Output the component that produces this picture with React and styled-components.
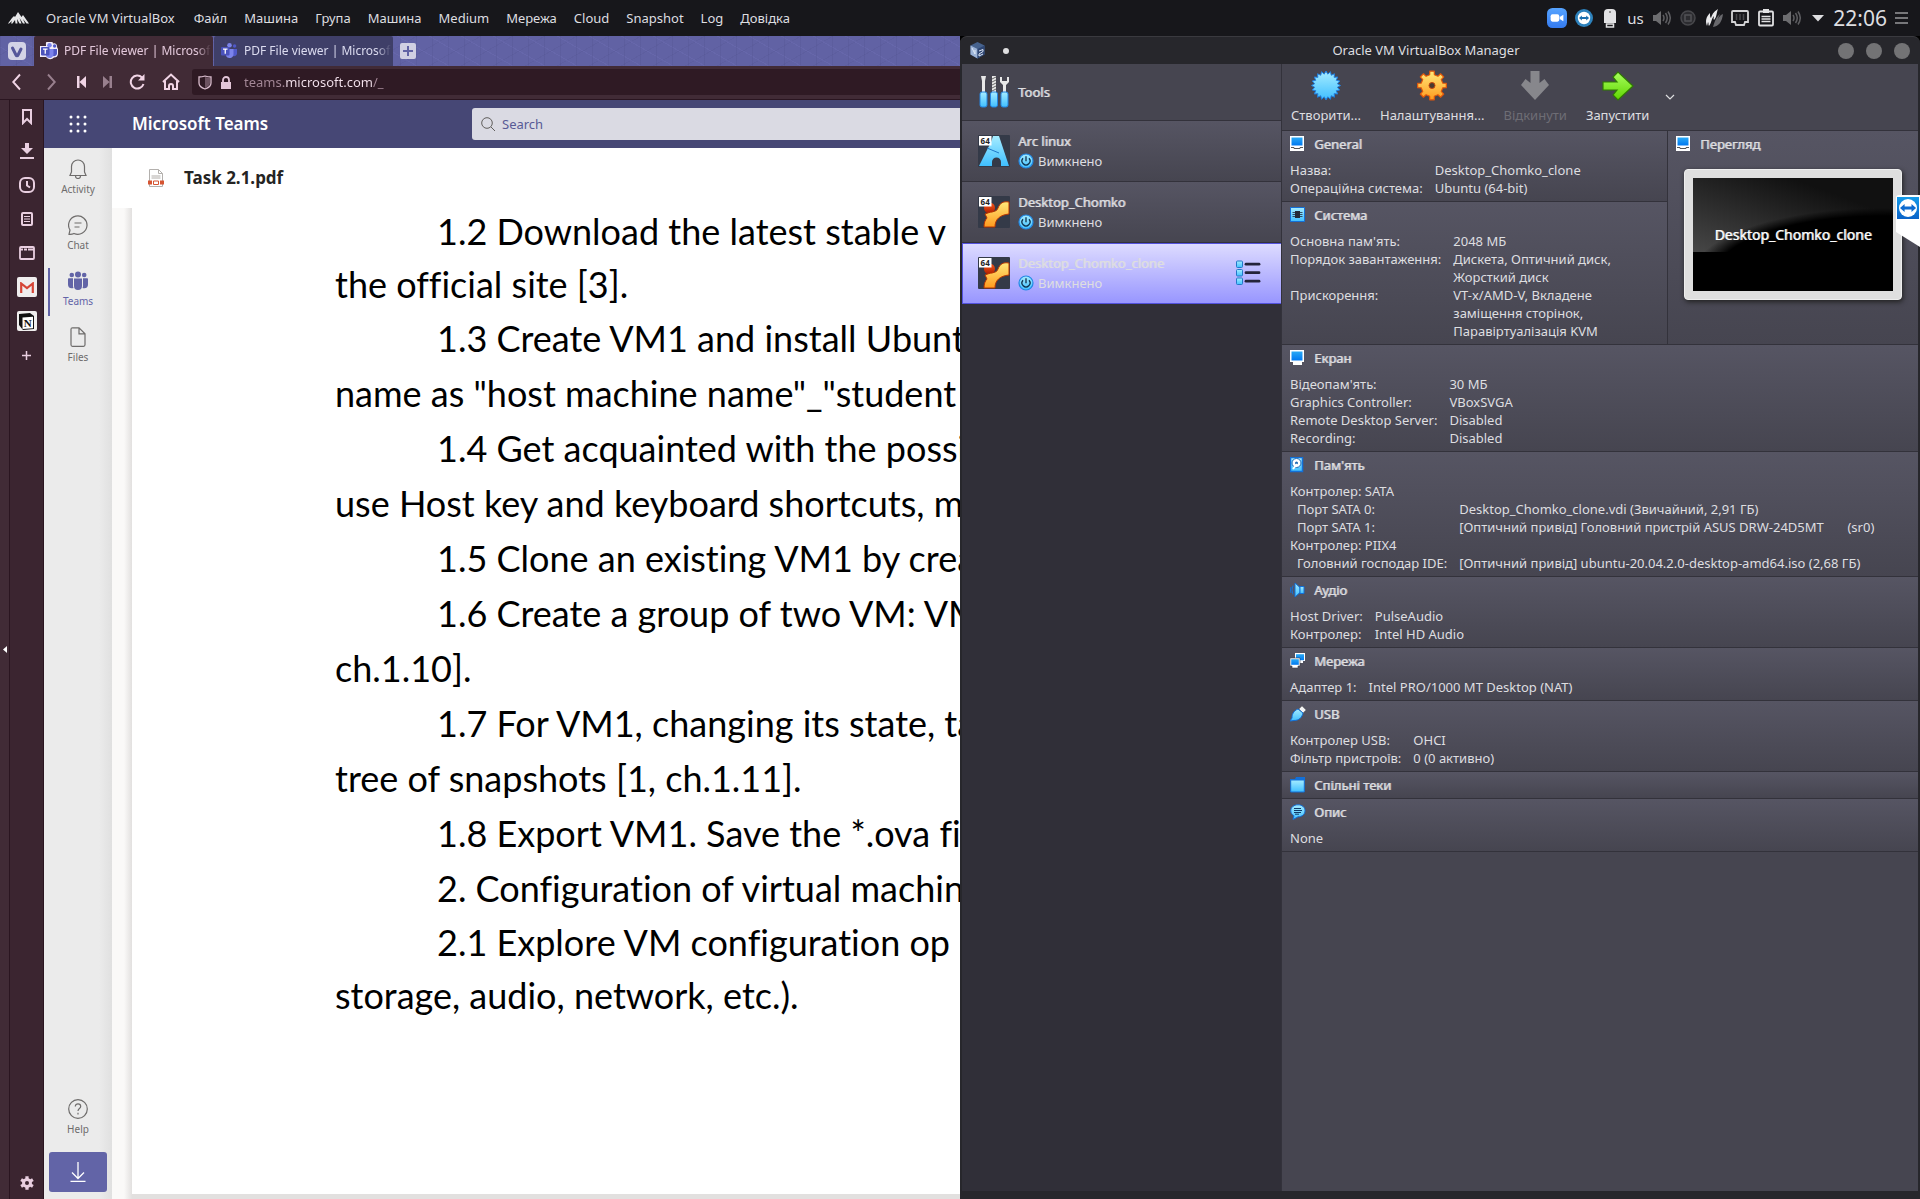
import React from "react";
import styled, { createGlobalStyle, css } from "styled-components";

const Global = createGlobalStyle`
  *, *::before, *::after { box-sizing: border-box; }
  html, body { margin: 0; height: 100%; background: #000; }
  #root { height: 100%; }
  body { font-family: "Noto Sans", "Open Sans", sans-serif; font-size: 13px; line-height: 18px; color: #dedee0; }
  button { font: inherit; color: inherit; background: none; border: 0; padding: 0; margin: 0; text-align: left; }
  input { font: inherit; border: 0; padding: 0; margin: 0; min-width: 0; outline: none; background: none; }
  h1, h2, p, ul, dl, dd, dt { margin: 0; padding: 0; font-size: inherit; font-weight: inherit; }
  ul { list-style: none; }
  svg { display: block; flex: none; }
`;

const thickText = css`
  text-shadow: 1px 0 0 rgba(222, 222, 224, 0.75);
`;

const Desktop = styled.div`
  display: flex;
  flex-direction: column;
  height: 100vh;
  overflow: hidden;
`;

/* ---------- top panel ---------- */

const Panel = styled.header`
  display: flex;
  align-items: center;
  justify-content: space-between;
  height: 36px;
  flex: none;
  padding: 0 12px 0 8px;
  background: #17171b;
`;
const MenuBar = styled.nav`
  display: flex;
  align-items: center;
  gap: 17px;
`;
const MenuButton = styled.button`
  white-space: nowrap;
`;
const AppName = styled.span`
  margin-right: 2px;
`;
const Tray = styled.div`
  display: flex;
  align-items: center;
`;
const TrayIcons = styled.div`
  display: flex;
  align-items: center;
  gap: 8px;
  margin-right: 6px;
`;
const Layout = styled.span`
  font-size: 15px;
  width: 18px;
`;
const Clock = styled.time`
  font-size: 21px;
  line-height: 28px;
  margin-right: 8px;
`;

/* ---------- workspace ---------- */

const Workspace = styled.main`
  display: grid;
  grid-template-columns: minmax(0, 1fr) minmax(0, 1fr);
  flex: 1;
  min-height: 0;
  position: relative;
`;

/* ---------- browser ---------- */

const Browser = styled.section`
  display: flex;
  flex-direction: column;
  min-width: 0;
  overflow: hidden;
  background: #412b36;
`;
const TabStrip = styled.div`
  display: flex;
  height: 30px;
  flex: none;
  background-color: #6162a4;
  background-image:
    repeating-linear-gradient(90deg, rgba(80, 80, 140, 0.25) 0 1px, transparent 1px 16px),
    repeating-linear-gradient(30deg, rgba(110, 110, 180, 0.4) 0 1px, transparent 1px 16px),
    repeating-linear-gradient(150deg, rgba(80, 80, 140, 0.2) 0 1px, transparent 1px 16px);
`;
const StripButton = styled.button`
  display: flex;
  align-items: center;
  justify-content: center;
  width: ${(p) => p.$width}px;
`;
const Tab = styled.button`
  display: flex;
  align-items: center;
  gap: 6px;
  width: 179px;
  padding: 0 2px 0 6px;
  margin-right: 1px;
  border-radius: 2px 2px 0 0;
  overflow: hidden;
  background: ${(p) => (p.$active ? "#412b36" : "#3f3f68")};
  color: ${(p) => (p.$active ? "#e3c8da" : "#dcdcf0")};
`;
const TabTitle = styled.span`
  flex: 1;
  font-size: 12px;
  white-space: nowrap;
  overflow: hidden;
  mask-image: linear-gradient(90deg, #000 90%, transparent);
`;
const AddressBar = styled.div`
  display: flex;
  align-items: center;
  height: 34px;
  flex: none;
  padding-bottom: 1px;
  border-bottom: 1px solid #2a1520;
  color: #f1d5e6;
`;
const NavButtons = styled.div`
  display: flex;
  width: 192px;
  flex: none;
`;
const NavButton = styled.button`
  display: flex;
  align-items: center;
  justify-content: center;
  width: ${(p) => p.$width}px;
  opacity: ${(p) => (p.disabled ? 0.5 : 1)};
  color: #f1d5e6;
`;
const UrlField = styled.label`
  display: flex;
  align-items: center;
  gap: 8px;
  flex: 1;
  height: 26px;
  padding-left: 6px;
  border-radius: 3px 0 0 3px;
  background: #2f1a24;
`;
const UrlInput = styled.input`
  flex: 1;
  margin-left: 4px;
  color: transparent;
  background: linear-gradient(90deg, #a58998 41px, #f5e3ee 41px 129px, #a58998 129px);
  background-clip: text;
  -webkit-background-clip: text;
`;
const BrowserBody = styled.div`
  display: flex;
  flex: 1;
  min-height: 0;
`;
const EdgeHandle = styled.button`
  display: flex;
  align-items: center;
  justify-content: center;
  width: 10px;
  border-right: 1px solid #2a1520;
`;
const WebPanels = styled.nav`
  display: flex;
  flex-direction: column;
  align-items: center;
  width: 34px;
  padding-bottom: 5px;
  background: #3b2530;
  border-right: 1px solid #2a1520;
  color: #e9cfe0;
`;
const PanelButton = styled.button`
  display: flex;
  align-items: center;
  justify-content: center;
  width: 34px;
  height: ${(p) => (p.$last ? 22 : 34)}px;
  margin-top: ${(p) => (p.$last ? "auto" : "0")};
`;
const Favicon = styled.span`
  display: flex;
  align-items: center;
  justify-content: center;
  width: 20px;
  height: 20px;
  border-radius: 2px;
  background: #f0eeee;
`;

/* ---------- teams ---------- */

const Teams = styled.div`
  display: flex;
  flex-direction: column;
  flex: 1;
  min-width: 0;
`;
const TeamsHeader = styled.header`
  display: flex;
  align-items: center;
  height: 48px;
  flex: none;
  background: #464775;
  color: #fff;
`;
const Waffle = styled.button`
  display: flex;
  justify-content: center;
  width: 68px;
`;
const TeamsTitle = styled.h1`
  width: 360px;
  padding-left: 20px;
  font-size: 17px;
  line-height: 26px;
  font-weight: 600;
`;
const SearchBox = styled.label`
  display: flex;
  align-items: center;
  gap: 6px;
  flex: 1;
  height: 32px;
  padding-left: 8px;
  border-radius: 3px 0 0 3px;
  background: #dadae3;
`;
const SearchInput = styled.input`
  flex: 1;
  &::placeholder { color: #585a96; opacity: 1; }
`;
const TeamsBody = styled.div`
  display: flex;
  flex: 1;
  min-height: 0;
`;
const Rail = styled.nav`
  display: flex;
  flex-direction: column;
  width: 68px;
  flex: none;
  padding: 4px 0 7px;
  background: linear-gradient(90deg, #ebebeb 55px, #e0e0e0);
`;
const RailButton = styled.button`
  display: flex;
  flex-direction: column;
  align-items: center;
  justify-content: center;
  gap: 3px;
  height: 56px;
  padding-bottom: 6px;
  margin-top: ${(p) => (p.$bottom ? "auto" : "0")};
  font-size: 10px;
  line-height: 14px;
  color: ${(p) => (p.$active ? "#6264a7" : "#6e6c6b")};
  background: ${(p) =>
    p.$active ? "linear-gradient(#6264a7, #6264a7) 4px 4px / 2px 48px no-repeat" : "none"};
`;
const GetApp = styled.button`
  display: flex;
  align-items: center;
  justify-content: center;
  height: 40px;
  margin: 4px 5px 0;
  border-radius: 3px;
  background: #6264a7;
  color: #fff;
`;
const FileView = styled.article`
  display: flex;
  flex-direction: column;
  flex: 1;
  min-width: 0;
  background: #fff;
`;
const FileHeader = styled.header`
  display: flex;
  align-items: center;
  gap: 20px;
  height: 60px;
  flex: none;
  padding-left: 36px;
  color: #252423;
  font-size: 17px;
  line-height: 26px;
  font-weight: 700;
`;
const Viewer = styled.div`
  flex: 1;
  min-height: 0;
  padding: 0 0 5px 20px;
  overflow: hidden;
  background: linear-gradient(90deg, #faf9f8 12px, #e2e0df 20px);
`;
const Sheet = styled.div`
  height: 100%;
  padding-left: 203px;
  overflow: hidden;
  background: #fff;
  color: #000;
  font-family: Lato, "Noto Sans", sans-serif;
  font-size: 36px;
  font-variant-ligatures: none;
`;
const DocText = styled.div`
  margin-top: -3px;
`;
const DocLine = styled.p`
  white-space: pre;
  line-height: ${(p) => (p.$short ? 53 : 55)}px;
  padding-left: ${(p) => (p.$indent ? 102 : 0)}px;
`;

/* ---------- VirtualBox ---------- */

const VBox = styled.section`
  display: flex;
  flex-direction: column;
  min-width: 0;
  padding: 0 2px 8px;
  border-top: 1px solid #3a3a3f;
  border-radius: 7px 7px 0 0;
  background: #27272c;
`;
const TitleBar = styled.header`
  display: grid;
  grid-template-columns: 70px 1fr 98px;
  align-items: center;
  height: 27px;
  flex: none;
`;
const TitleLeft = styled.div`
  display: flex;
  align-items: center;
  gap: 18px;
  padding-left: 8px;
`;
const PinDot = styled.span`
  width: 6px;
  height: 6px;
  border-radius: 50%;
  background: #dedee0;
`;
const WindowTitle = styled.h1`
  padding-bottom: 2px;
  text-align: center;
`;
const WindowButtons = styled.div`
  display: flex;
  justify-content: flex-end;
  gap: 12px;
  padding-right: 8px;
`;
const WindowButton = styled.button`
  width: 16px;
  height: 16px;
  border-radius: 50%;
  background: #737375;
`;
const VBoxBody = styled.div`
  display: grid;
  grid-template-columns: 320px minmax(0, 1fr);
  flex: 1;
  min-height: 0;
  background: #464550;
`;
const MachineList = styled.nav`
  border-right: 1px solid #33323b;
  background: #302f38;
`;
const ToolsRow = styled.button`
  display: flex;
  align-items: center;
  gap: 8px;
  width: 100%;
  height: 57px;
  padding-left: 16px;
  border-bottom: 1px solid #33323b;
  background: #464550;
  ${thickText}
`;
const MachineRow = styled.button`
  display: flex;
  align-items: center;
  gap: 8px;
  width: 100%;
  height: 61px;
  padding: 0 20px 0 16px;
  border-bottom: 1px solid ${(p) => (p.$selected ? "#5352dd" : "#33323b")};
  background: ${(p) =>
    p.$selected ? "linear-gradient(#dedcff, #9896ff)" : "linear-gradient(#565563, #464550)"};
  box-shadow: ${(p) => (p.$selected ? "inset 1px 1px 0 #5352dd" : "none")};
`;
const MachineText = styled.span`
  display: flex;
  flex-direction: column;
  flex: 1;
  gap: 2px;
`;
const MachineName = styled.span`
  ${thickText}
`;
const MachineState = styled.span`
  display: flex;
  align-items: center;
  gap: 4px;
`;
const Details = styled.div`
  min-width: 0;
`;
const Toolbar = styled.div`
  display: flex;
  height: 67px;
  border-bottom: 1px solid #33323b;
`;
const ToolButton = styled.button`
  display: flex;
  flex-direction: column;
  align-items: center;
  gap: 4px;
  padding: 6px 10px 0 9px;
  white-space: nowrap;
  color: ${(p) => (p.disabled ? "#6e6d75" : "#dedee0")};
`;
const MenuArrow = styled.button`
  padding: 0 6px;
`;
const Split = styled.div`
  display: grid;
  grid-template-columns: minmax(0, 1fr) 251px;
`;
const PreviewColumn = styled.div`
  display: flex;
  border-left: 1px solid #33323b;
`;
const Section = styled.section`
  width: 100%;
  padding: 0 8px;
  border-bottom: 1px solid #33323b;
  background: linear-gradient(#565563, #464550);
`;
const SectionTitle = styled.h2`
  display: flex;
  align-items: center;
  gap: 8px;
  height: 26px;
  ${thickText}
`;
const Facts = styled.dl`
  display: grid;
  grid-template-columns: max-content minmax(0, 1fr);
  column-gap: 12px;
  padding: 4px 0;
`;
const FactName = styled.dt`
  padding-left: ${(p) => (p.$nested ? 7 : 0)}px;
`;
const FactValue = styled.dd`
  white-space: pre-wrap;
`;
const Note = styled.p`
  padding: 4px 0;
`;
const Monitor = styled.div`
  height: 131px;
  margin: 12px 8px 0;
  padding: 8px;
  border: 1px solid #eeeeee;
  border-radius: 4px;
  background: #dfdfdf;
  box-shadow: 1px 2px 5px #222;
`;
const Screen = styled.div`
  display: flex;
  align-items: center;
  justify-content: center;
  height: 100%;
  font-size: 14px;
  color: #fff;
  text-shadow: 1px 0 0 rgba(255, 255, 255, 0.7);
  background:
    radial-gradient(ellipse 190px 66px at 190px 96px, #000 88%, transparent),
    linear-gradient(#000, #000) 0 74px / 100% 60px no-repeat,
    linear-gradient(200deg, #111 20%, #5a5a5a);
`;
const RemoteTab = styled.button`
  position: absolute;
  right: 0;
  top: 159px;
`;

/* ---------- small drawings ---------- */

const Stroke = ({ size = 18, w = 1.3, box = 24, children }) => (
  <svg width={size} height={size} viewBox={`0 0 ${box} ${box}`} fill="none" stroke="currentColor" strokeWidth={w}>
    {children}
  </svg>
);

const HiddenSvg = styled.svg`
  position: absolute;
`;

const Defs = () => (
  <HiddenSvg width="0" height="0" aria-hidden="true">
    <defs>
      <linearGradient id="sky" x1="0" y1="0" x2="0" y2="1">
        <stop offset="0" stopColor="#a6ecff" /><stop offset="1" stopColor="#3fbfff" />
      </linearGradient>
      <linearGradient id="sun" x1="0" y1="0" x2="0" y2="1">
        <stop offset="0" stopColor="#ffe97a" /><stop offset="1" stopColor="#ff9a1e" />
      </linearGradient>
      <linearGradient id="leaf" x1="0" y1="0" x2="0" y2="1">
        <stop offset="0" stopColor="#a8ff5e" /><stop offset="1" stopColor="#5fd400" />
      </linearGradient>
      <linearGradient id="fire" x1="0" y1="0" x2="0" y2="1">
        <stop offset="0" stopColor="#ff5a1a" /><stop offset="1" stopColor="#a81c00" />
      </linearGradient>
      <linearGradient id="glass" x1="0" y1="0" x2="0" y2="1">
        <stop offset="0" stopColor="#29a9f5" /><stop offset="1" stopColor="#0078f0" />
      </linearGradient>
      <linearGradient id="zoomBlue" x1="0" y1="0" x2="0" y2="1">
        <stop offset="0" stopColor="#56a3ff" /><stop offset="1" stopColor="#357bf0" />
      </linearGradient>
      <linearGradient id="tvBlue" x1="0" y1="0" x2="0" y2="1">
        <stop offset="0" stopColor="#149bea" /><stop offset="1" stopColor="#0a62c8" />
      </linearGradient>
    </defs>
  </HiddenSvg>
);

const MountainLogo = () => (
  <svg width="21" height="12" viewBox="0 0 21 12" fill="#e6e6e8">
    <path d="M0 11.500 4 6l2-2 1 1 3-5 3.500 5L15 3l6 8.500h-2.500L15 7l2 4.500h-2L11.500 6l2 5.500h-2L9 7l.5 4.500h-2L7 8l-2.500 3.500H3L4 9l-3 2.500Z" />
  </svg>
);

const Speaker = () => (
  <svg width="18" height="16" viewBox="0 0 18 16" fill="#6d6d70">
    <path d="M0 5h3l5-4v14l-5-4H0Z" />
    <path d="M10 5q2 3 0 6M12.500 3q3.500 5 0 10M15 1.500q4.500 6.500 0 13" fill="none" stroke="#5e5e62" strokeWidth="1.500" />
  </svg>
);

const arrowsPath = "M0 5 4 1.500v2.200h6V1.500L14 5l-4 3.500V6.300H4v2.200Z";

const TeamViewerRound = () => (
  <svg width="18" height="18" viewBox="0 0 18 18">
    <circle cx="9" cy="9" r="9" fill="#2d82bd" />
    <circle cx="9" cy="9" r="6.200" fill="#fff" />
    <path d={arrowsPath} transform="translate(4 5.400) scale(.72)" fill="#1b6fae" />
  </svg>
);

const TeamsLogo = ({ lit }) => (
  <svg width="18" height="18" viewBox="0 0 18 18">
    {lit && <path d="M0 4h6V3a3.500 3.500 0 0 1 7-1.500A3 3 0 0 1 17 5l1 2v5a4 4 0 0 1-4 3.500A5 5 0 0 1 6 15H0Z" fill="#f3eefa" />}
    <circle cx="9.500" cy="3.200" r="2.300" fill="#7b83eb" />
    <circle cx="14.600" cy="4" r="1.700" fill="#5059c9" />
    <path d="M13 7h4v4.500a2.800 2.800 0 0 1-4 2.500Z" fill="#5059c9" />
    <path d="M6 7h7.500v5a4 4 0 0 1-7.500 2Z" fill="#7b83eb" />
    <rect x="1" y="5" width="8.500" height="8.500" rx="1" fill="#4b53bc" />
    <path d="M3 7.200h4.500M5.250 7.200v4.500" stroke="#fff" strokeWidth="1.300" />
  </svg>
);

const Starburst = () => {
  const pts = Array.from({ length: 40 }, (_, i) => {
    const r = i % 2 ? 11.5 : 14.5;
    const a = (i * Math.PI) / 20;
    return `${15 + r * Math.sin(a)},${15 - r * Math.cos(a)}`;
  }).join(" ");
  return (
    <svg width="30" height="32" viewBox="0 0 30 31">
      <polygon points={pts} fill="url(#sky)" stroke="#1f7fe0" strokeWidth="1" />
    </svg>
  );
};

const gearPath = (n, outer, inner, c, flare = 1.25) => {
  const out = [];
  for (let i = 0; i < n; i++) {
    const m = (i * 2 * Math.PI) / n;
    [[-0.5, inner], [-0.36, outer], [0.36, outer], [0.5, inner]].forEach(([k, r]) => {
      const a = m + (k * flare * Math.PI) / n;
      out.push(`${(c + r * Math.sin(a)).toFixed(2)} ${(c - r * Math.cos(a)).toFixed(2)}`);
    });
  }
  return `M${out.join("L")}Z`;
};

const GearBig = () => (
  <svg width="30" height="32" viewBox="0 0 30 31">
    <path d={gearPath(8, 14.5, 11, 15, 1.1)} fill="url(#sun)" stroke="#e0560a" strokeWidth="1.200" strokeLinejoin="round" />
    <circle cx="15" cy="15" r="3" fill="#4a3a30" stroke="#c9480a" />
  </svg>
);

const DiscardArrow = () => (
  <svg width="30" height="32" viewBox="0 0 30 32">
    <path d="M10.500 1h9v12l5-4 4.500 6-14 15L1 15l4.500-6 5 4Z" fill="#87878c" />
  </svg>
);

const StartArrow = () => (
  <svg width="32" height="32" viewBox="0 0 32 32">
    <path d="M1 12h14l-4-5 5-5 15 14-15 14-5-5 4-5H1Z" fill="url(#leaf)" stroke="#2f7a00" strokeWidth="1.200" />
  </svg>
);

const ToolsIcon = () => (
  <svg width="32" height="32" viewBox="0 0 32 32">
    <path d="M3 0h5l-1 5v11H4V5Z" fill="#e8e8e8" />
    <path d="M14 0h4v16h-4Z" fill="#e8e8e8" />
    <path d="m14 3 4-2m-4 5 4-2m-4 5 4-2m-4 5 4-2m-4 5 4-2" stroke="#666" strokeWidth="1" />
    <path d="M22 1v5l3 3v7h3V9l3-3V1h-2v4h-5V1Z" fill="#e8e8e8" />
    {[2, 12.5, 23].map((x) => (
      <rect key={x} x={x} y="16" width="7" height="15" rx="2" fill="url(#sky)" stroke="#2585e0" />
    ))}
  </svg>
);

const Badge64 = () => (
  <g>
    <rect x="1" y="1" width="12.500" height="9.500" fill="#fff" />
    <text x="7.200" y="8.500" fontSize="8" fontWeight="700" textAnchor="middle" fill="#222" fontFamily="Noto Sans, sans-serif">64</text>
  </g>
);

const ArchIcon = () => (
  <svg width="32" height="32" viewBox="0 0 32 32">
    <rect width="32" height="32" rx="1" fill="#343a48" />
    <path d="M1 31 13 7l2-6h6l10 30h-8v-4a4.500 4.500 0 0 0-9 0v4Z" fill="url(#sky)" />
    <path d="m9 13 12 5" stroke="#1e78c8" strokeWidth="1" />
    <Badge64 />
  </svg>
);

const UbuntuIcon = () => (
  <svg width="32" height="32" viewBox="0 0 32 32">
    <rect width="32" height="32" rx="1" fill="#343a48" />
    <circle cx="11.500" cy="12" r="5.500" fill="url(#fire)" />
    <path d="M31 6C25 5 22 7 20 12c-1 3-3 3-6 4-2 0-4 1-7 2l2 4c-2 2-3 5-3 9h11c0-8 5-12 14-13Z" fill="url(#sun)" stroke="#b83400" strokeWidth="1" />
    <Badge64 />
  </svg>
);

const PowerIcon = () => (
  <svg width="16" height="16" viewBox="0 0 16 16">
    <circle cx="8" cy="8" r="7" fill="url(#sky)" stroke="#2288e4" strokeWidth="1.200" />
    <path d="M5 5.200a4 4 0 1 0 6 0M8 3.200v5" fill="none" stroke="#10304c" strokeWidth="1.300" />
  </svg>
);

const MachineMenuIcon = () => (
  <svg width="26" height="26" viewBox="0 0 26 26">
    {[1, 9.5, 18].map((y) => (
      <g key={y}>
        <rect x="1.500" y={y} width="6" height="6.500" rx="1" fill="url(#sky)" stroke="#2378c8" />
        <path d={`M11 ${y + 3.2}h13`} stroke="#24243a" strokeWidth="2.800" strokeLinecap="round" />
      </g>
    ))}
  </svg>
);

const VBoxCube = () => (
  <svg width="15" height="17" viewBox="0 0 15 17">
    <path d="m7.500 0 7 3.500v9l-7 4-7-4v-9Z" fill="#46628e" />
    <path d="m.5 3.500 7 3.500v9.500l-7-4Z" fill="#9db4d8" />
    <path d="m7.500 7 7-3.500v9l-7 4Z" fill="#2e4674" />
    <path d="m2 6 3 6V8M9 9l4-1.500v2L9 12v2l4-2" fill="none" stroke="#dfe8f6" strokeWidth="1" />
  </svg>
);

const shapes = {
  general: <><path d="M0 0h14v15H0Z" fill="#fff" /><path d="M1.500 1.500h11v8h-11Z" fill="url(#glass)" /><path d="M1 11.500h3v1h6v-1h3" fill="none" stroke="#555" /></>,
  system: <><path d="M.5.5h14v14H.5Z" fill="url(#sky)" stroke="#1370d8" /><path d="M5 4h5v7H5Z" fill="#242b38" /><path d="M2.500 5.500h10M2.500 7.500h10M2.500 9.500h10" stroke="#242b38" strokeWidth=".8" /></>,
  display: <><path d="M0 0h14v12h-2v3H3v-3H0Z" fill="#fff" /><path d="M1.500 1.500h11v9h-11Z" fill="url(#glass)" /></>,
  storage: <><path d="M.5.5h12v14H.5Z" fill="url(#sky)" stroke="#1370d8" strokeWidth="1.500" /><circle cx="6.500" cy="6" r="4.500" fill="#fff" stroke="#1c67b4" /><circle cx="6.500" cy="6" r="1.500" fill="#1c67b4" /><path d="m3 12 4-5" stroke="#fff" strokeWidth="2" /></>,
  audio: <><path d="M5 1v14l5-4.500V5.500Z" fill="url(#sky)" stroke="#1370d8" /><path d="M10 4.500h4v7h-4Z" fill="url(#sky)" stroke="#1370d8" /><path d="M3 3.500q-2 4.500 0 9M1 5q-1.200 3 0 6" stroke="#1370d8" fill="none" /></>,
  network: <><path d="M5 0h10v8h-2v2H5Z" fill="#fff" /><path d="M6 1.200h8v6H6Z" fill="url(#glass)" /><path d="M0 5h10v8H8v2H2v-2H0Z" fill="#fff" stroke="#3c3c46" strokeWidth=".6" /><path d="M1.200 6.200h7.600v5.600H1.200Z" fill="url(#glass)" /></>,
  usb: <><path d="m9 3 3-3 4 4-3 3Z" fill="#f4f4f4" stroke="#777" strokeWidth=".6" /><path d="M8 3C3 5 2 9 2 12l-2 3 4-.5c5 0 8-3 9-7.500Z" fill="url(#sky)" stroke="#1370d8" /></>,
  folder: <><path d="M0 2h5l1-2h9v4H0Z" fill="#1370d8" /><path d="M.7 3h13.600v12H.7Z" fill="url(#sky)" stroke="#1370d8" /></>,
  note: <><path d="M8 .8c4 0 7 2.400 7 6s-3 6-7 6l-5 2.700 1-3.700C2 10.500.8 9 .8 6.800.8 3.200 4 .8 8 .8Z" fill="url(#sky)" stroke="#1370d8" /><path d="M4 4.500h7M4 6.500h8M4 8.500h7M5 10.200h4" stroke="#103a68" /></>,
};
const SectionIcon = ({ name }) => (
  <svg width="16" height="16" viewBox="0 0 16 16">{shapes[name]}</svg>
);

/* ---------- data ---------- */

const menus = ["Файл", "Машина", "Група", "Машина", "Medium", "Мережа", "Cloud", "Snapshot", "Log", "Довідка"];

const documentLines = [
  { text: "1.2 Download the latest stable v", indent: true, short: true },
  { text: "the official site [3].", short: true },
  { text: "1.3 Create VM1 and install Ubuntu", indent: true },
  { text: 'name as "host machine name"_"student' },
  { text: "1.4 Get acquainted with the possib", indent: true },
  { text: "use Host key and keyboard shortcuts, mo" },
  { text: "1.5 Clone an existing VM1 by creat", indent: true },
  { text: "1.6 Create a group of two VM: VM", indent: true },
  { text: "ch.1.10]." },
  { text: "1.7 For VM1, changing its state, ta", indent: true },
  { text: "tree of snapshots [1, ch.1.11]." },
  { text: "1.8 Export VM1. Save the *.ova file", indent: true },
  { text: "2. Configuration of virtual machine", indent: true },
  { text: "2.1 Explore VM configuration op", indent: true, short: true },
  { text: "storage, audio, network, etc.).", short: true },
];

const machines = [
  { name: "Arc linux", icon: <ArchIcon /> },
  { name: "Desktop_Chomko", icon: <UbuntuIcon /> },
  { name: "Desktop_Chomko_clone", icon: <UbuntuIcon />, selected: true },
];

const topSections = [
  { icon: "general", title: "General", facts: [["Назва:", "Desktop_Chomko_clone"], ["Операційна система:", "Ubuntu (64-bit)"]] },
  {
    icon: "system",
    title: "Система",
    facts: [
      ["Основна пам'ять:", "2048 МБ"],
      ["Порядок завантаження:", "Дискета, Оптичний диск, Жорсткий диск"],
      ["Прискорення:", "VT-x/AMD-V, Вкладене заміщення сторінок, Паравіртуалізація KVM"],
    ],
  },
];

const sections = [
  {
    icon: "display",
    title: "Екран",
    facts: [
      ["Відеопам'ять:", "30 МБ"],
      ["Graphics Controller:", "VBoxSVGA"],
      ["Remote Desktop Server:", "Disabled"],
      ["Recording:", "Disabled"],
    ],
  },
  {
    icon: "storage",
    title: "Пам'ять",
    facts: [
      ["Контролер: SATA", ""],
      ["Порт SATA 0:", "Desktop_Chomko_clone.vdi (Звичайний, 2,91 ГБ)", true],
      ["Порт SATA 1:", "[Оптичний привід] Головний пристрій ASUS DRW-24D5MT       (sr0)", true],
      ["Контролер: PIIX4", ""],
      ["Головний господар IDE:", "[Оптичний привід] ubuntu-20.04.2.0-desktop-amd64.iso (2,68 ГБ)", true],
    ],
  },
  { icon: "audio", title: "Аудіо", facts: [["Host Driver:", "PulseAudio"], ["Контролер:", "Intel HD Audio"]] },
  { icon: "network", title: "Мережа", facts: [["Адаптер 1:", "Intel PRO/1000 MT Desktop (NAT)"]] },
  { icon: "usb", title: "USB", facts: [["Контролер USB:", "OHCI"], ["Фільтр пристроїв:", "0 (0 активно)"]] },
  { icon: "folder", title: "Спільні теки" },
  { icon: "note", title: "Опис", note: "None" },
];

const DetailSection = ({ icon, title, facts, note }) => (
  <Section>
    <SectionTitle><SectionIcon name={icon} />{title}</SectionTitle>
    {facts && (
      <Facts>
        {facts.map(([name, value, nested]) => (
          <React.Fragment key={name}>
            <FactName $nested={nested}>{name}</FactName>
            <FactValue>{value}</FactValue>
          </React.Fragment>
        ))}
      </Facts>
    )}
    {note && <Note>{note}</Note>}
  </Section>
);

const TopPanel = () => (
  <Panel>
    <MenuBar>
      <MountainLogo />
      <AppName>Oracle VM VirtualBox</AppName>
      {menus.map((m, i) => <MenuButton key={i}>{m}</MenuButton>)}
    </MenuBar>
    <Tray>
      <TrayIcons>
        <svg width="20" height="20" viewBox="0 0 22 22"><rect width="22" height="22" rx="6" fill="url(#zoomBlue)" /><rect x="4" y="7" width="9.500" height="8" rx="2" fill="#fff" /><path d="m14 10 4-2.700v7.400L14 12Z" fill="#fff" /></svg>
        <TeamViewerRound />
        <svg width="18" height="20" viewBox="0 0 18 20"><path d="M3 15V5a4 4 0 0 1 4-4h4a4 4 0 0 1 4 4v10Z" fill="#e2e2e4" /><path d="M5.500 16h7v3h-7Z" fill="none" stroke="#e2e2e4" strokeWidth="1.500" /><path d="M9 3v2" stroke="#777" strokeWidth="1.500" /></svg>
        <Layout>us</Layout>
        <Speaker />
        <svg width="18" height="16" viewBox="0 0 18 16"><circle cx="9" cy="8" r="7" fill="#2c2c30" stroke="#47474b" strokeWidth="1.500" /><rect x="6" y="5" width="6" height="6" fill="none" stroke="#515155" strokeWidth="1.500" /></svg>
        <svg width="18" height="18" viewBox="0 0 18 18"><path d="M8 18c6-1 9-5 10-13-3 1-5 4-5 6 0-2 1-4 2-6-4 3-5 7-7 13Z" fill="#68686c" /><path d="M2 17C0 12 1 8 5 4c0 3 0 4 1 5 1-3 2-6 7-9-2 5-1 8-4 11-1-1 0-3 0-4-3 3-2 6-5 10-1-1 0-3-1-4Z" fill="#eaeaec" /></svg>
        <svg width="18" height="16" viewBox="0 0 18 16"><path d="M2 1h14a1 1 0 0 1 1 1v10h-3l-1 3H5l-1-3H1V2a1 1 0 0 1 1-1Z" fill="none" stroke="#d4d4d6" strokeWidth="1.800" /><path d="M5.500 4v6M9 4v6M12.500 4v6" stroke="#48484c" strokeWidth="1.500" /></svg>
        <svg width="18" height="18" viewBox="0 0 18 18"><rect x="2" y="2.500" width="14" height="14" rx="1" fill="none" stroke="#e2e2e4" strokeWidth="1.800" /><path d="M6 0h6v4H6Z" fill="#e2e2e4" /><path d="M4.500 7.500h9M4.500 10h9M4.500 12.500h9" stroke="#e2e2e4" strokeWidth="1.300" /></svg>
        <Speaker />
        <svg width="18" height="8" viewBox="0 0 18 8"><path d="M3 1h12L9 7.500Z" fill="#dedee0" /></svg>
      </TrayIcons>
      <Clock>22:06</Clock>
      <svg width="13" height="12" viewBox="0 0 13 12" stroke="#77777a" strokeWidth="2"><path d="M0 1h13M0 6h13M0 11h13" /></svg>
    </Tray>
  </Panel>
);

const BrowserWindow = () => (
  <Browser>
    <TabStrip>
      <StripButton $width={34} aria-label="Vivaldi">
        <svg width="18" height="18" viewBox="0 0 18 18"><rect width="18" height="18" rx="4" fill="#d3d3e6" /><path d="m4.500 6 3.500 7c.5 1 1.500 1 2 0l3-6" fill="none" stroke="#55569a" strokeWidth="3" strokeLinecap="round" /></svg>
      </StripButton>
      {[true, false].map((active) => (
        <Tab key={String(active)} $active={active}>
          <TeamsLogo lit={active} />
          <TabTitle>PDF File viewer | Microsof</TabTitle>
        </Tab>
      ))}
      <StripButton $width={28} aria-label="Нова вкладка">
        <svg width="16" height="16" viewBox="0 0 16 16"><rect width="16" height="16" rx="2" fill="#d0cfe2" /><path d="M8 3v10M3 8h10" stroke="#6162a4" strokeWidth="2" /></svg>
      </StripButton>
    </TabStrip>
    <AddressBar>
      <NavButtons>
        <NavButton $width={34} aria-label="Назад"><Stroke w={2.500}><path d="m16 2-9 10 9 10" /></Stroke></NavButton>
        <NavButton $width={34} disabled aria-label="Вперед"><Stroke w={2.500}><path d="m8 2 9 10-9 10" /></Stroke></NavButton>
        <NavButton $width={26} aria-label="На початок"><svg width="9" height="12" viewBox="0 0 9 12" fill="currentColor"><path d="M0 0h2.500v12H0ZM9 0v12L2.500 6Z" /></svg></NavButton>
        <NavButton $width={26} disabled aria-label="У кінець"><svg width="9" height="12" viewBox="0 0 9 12" fill="currentColor"><path d="M6.500 0H9v12H6.500ZM0 0v12l6.500-6Z" /></svg></NavButton>
        <NavButton $width={33} aria-label="Оновити"><svg width="16" height="16" viewBox="0 0 16 16" fill="none" stroke="currentColor" strokeWidth="2"><path d="M14.500 10A6.500 6.500 0 1 1 13 3.500" /><path d="M15.500 0v6.500H9Z" fill="currentColor" stroke="none" /></svg></NavButton>
        <NavButton $width={36} aria-label="Домівка"><svg width="18" height="18" viewBox="0 0 18 18" fill="none" stroke="currentColor" strokeWidth="2"><path d="M1 9 9 1.500 17 9M3 8v8h4v-3a2 2 0 0 1 4 0v3h4V8" /></svg></NavButton>
      </NavButtons>
      <UrlField>
        <svg width="14" height="15" viewBox="0 0 14 15"><path d="M1 2q3 0 6-1 3 1 6 1v6q0 4-6 6-6-2-6-6Z" fill="none" stroke="#d9bccd" strokeWidth="1.300" /><path d="M7 2q3 1 5 1v5q0 3-5 5Z" fill="#6d5361" /></svg>
        <svg width="12" height="13" viewBox="0 0 12 13"><path d="M1 6h10v7H1Z" fill="#e3c6d8" /><path d="M3 6V4a3 3 0 0 1 6 0v2" fill="none" stroke="#e3c6d8" strokeWidth="1.800" /></svg>
        <UrlInput defaultValue="teams.microsoft.com/_" aria-label="Адреса" />
      </UrlField>
    </AddressBar>
    <BrowserBody>
      <EdgeHandle aria-label="Сховати панель"><svg width="4" height="7" viewBox="0 0 4 7"><path d="M4 0v7L0 3.500Z" fill="#fff" /></svg></EdgeHandle>
      <WebPanels>
        <PanelButton aria-label="Закладки"><svg width="12" height="16" viewBox="0 0 12 16" fill="none" stroke="currentColor" strokeWidth="2"><path d="M2 1h8v13l-4-4-4 4Z" /></svg></PanelButton>
        <PanelButton aria-label="Завантаження"><svg width="14" height="16" viewBox="0 0 14 16" fill="currentColor"><path d="M5 0h4v5h4l-6 6-6-6h4ZM0 14h14v2H0Z" /></svg></PanelButton>
        <PanelButton aria-label="Історія"><svg width="16" height="16" viewBox="0 0 16 16" fill="none" stroke="currentColor" strokeWidth="2"><rect x="1" y="1" width="14" height="14" rx="5" /><path d="M8 4v4.500l3 2" /></svg></PanelButton>
        <PanelButton aria-label="Нотатки"><svg width="12" height="14" viewBox="0 0 12 14" fill="none" stroke="currentColor"><rect x="1" y="1" width="10" height="12" rx="1" strokeWidth="2" /><path d="M3 4.500h6M3 7h6M3 9.500h6" /></svg></PanelButton>
        <PanelButton aria-label="Вікна"><svg width="16" height="14" viewBox="0 0 16 14" fill="none" stroke="currentColor" strokeWidth="1.800"><rect x="1" y="1" width="14" height="12" rx="1" /><path d="M1 3.500h14" strokeDasharray="3 1 3 1 9" strokeWidth="2" /></svg></PanelButton>
        <PanelButton aria-label="Gmail"><Favicon><svg width="14" height="11" viewBox="0 0 14 11" fill="none" stroke="#d64536" strokeWidth="2.200"><path d="M1.200 11V1.500L7 6l5.800-4.500V11" /></svg></Favicon></PanelButton>
        <PanelButton aria-label="Notion"><Favicon><svg width="17" height="17" viewBox="0 0 17 17"><path d="m1 1 11-1 4 3v13l-11 1-4-5Z" fill="#111" /><path d="m4.500 4.500 10.500-.8v11.500l-10.500.8Z" fill="#fff" /><text x="9.700" y="13.800" fontSize="11" fontWeight="700" textAnchor="middle" fontFamily="Liberation Serif, serif" fill="#111">N</text></svg></Favicon></PanelButton>
        <PanelButton aria-label="Додати"><svg width="9" height="9" viewBox="0 0 9 9" stroke="currentColor" strokeWidth="1.500"><path d="M4.500 0v9M0 4.500h9" /></svg></PanelButton>
        <PanelButton $last aria-label="Налаштування"><svg width="14" height="14" viewBox="0 0 14 14"><path d={gearPath(6, 7, 5, 7)} fill="currentColor" /><circle cx="7" cy="7" r="2" fill="#3b2530" /></svg></PanelButton>
      </WebPanels>
      <Teams>
        <TeamsHeader>
          <Waffle aria-label="App launcher">
            <svg width="18" height="18" viewBox="0 0 18 18" fill="#fff">{[2, 9, 16].flatMap((x) => [2, 9, 16].map((y) => <circle key={`${x}-${y}`} cx={x} cy={y} r="1.500" />))}</svg>
          </Waffle>
          <TeamsTitle>Microsoft Teams</TeamsTitle>
          <SearchBox>
            <svg width="16" height="16" viewBox="0 0 16 16" fill="none" stroke="#605e5c"><circle cx="7" cy="7" r="5.300" /><path d="m11 11 4 4" /></svg>
            <SearchInput placeholder="Search" aria-label="Search" />
          </SearchBox>
        </TeamsHeader>
        <TeamsBody>
          <Rail>
            <RailButton><svg width="20" height="20" viewBox="0 0 20 20" fill="none" stroke="currentColor" strokeWidth="1.200"><path d="M3.500 13V7.500a6.500 6.500 0 0 1 13 0V13l1.500 3.500H2ZM7.500 17a2.500 2.500 0 0 0 5 0" /></svg>Activity</RailButton>
            <RailButton><svg width="20" height="20" viewBox="0 0 20 20" fill="none" stroke="currentColor" strokeWidth="1.200"><path d="M1 19.300 2 15a9.200 9.200 0 1 1 4 3.500Q4 19.500 1 19.300ZM6.500 8h7M6.500 12h5" /></svg>Chat</RailButton>
            <RailButton $active><svg width="20" height="20" viewBox="0 0 20 20" fill="currentColor"><circle cx="10" cy="3.500" r="3" /><circle cx="3.800" cy="4" r="2.300" /><circle cx="16.200" cy="4" r="2.300" /><path d="M6 7.500h8V15a4 4 0 0 1-8 0ZM0 8q0-.8.800-.8H5V15q0 1 .5 2Q0 18 0 13.500ZM20 8q0-.8-.8-.8H15V15q0 1-.5 2 5.500 1 5.500-3.500Z" /></svg>Teams</RailButton>
            <RailButton><svg width="16" height="20" viewBox="0 0 16 20" fill="none" stroke="currentColor" strokeWidth="1.200"><path d="M2.500.8H9l6 6v11q0 1.500-1.500 1.500h-11Q1 19.300 1 17.800V2.300Q1 .8 2.500.8ZM9 .8v6h6" /></svg>Files</RailButton>
            <RailButton $bottom><svg width="20" height="20" viewBox="0 0 20 20" fill="none" stroke="currentColor" strokeWidth="1.200"><circle cx="10" cy="10" r="9.300" /><path d="M7.300 7.500c0-3.500 5.400-3.500 5.400 0 0 2-2.700 2.200-2.700 4.500M10 13.800v1.700" /></svg>Help</RailButton>
            <GetApp aria-label="Download the app"><svg width="16" height="20" viewBox="0 0 16 20" fill="none" stroke="currentColor" strokeWidth="1.300"><path d="M8 0v16M2 10.500l6 6 6-6M.5 19.300h15" /></svg></GetApp>
          </Rail>
          <FileView>
            <FileHeader>
              <svg width="16" height="18" viewBox="0 0 16 18"><path d="M1.500.5h9l4 4v13h-13Z" fill="#fff" stroke="#b3b0ad" /><path d="M10.500.5v4h4" fill="none" stroke="#b3b0ad" /><path d="M3.500 6h9v4h-9Z" fill="#d8d6d4" /><path d="M0 11.500h4v4H0ZM12 11.500h4v4h-4Z" fill="#d65532" /><path d="M5.500 12h5v3.500h-5Z" fill="#fff" stroke="#d65532" /></svg>
              Task 2.1.pdf
            </FileHeader>
            <Viewer>
              <Sheet>
                <DocText>
                  {documentLines.map((l) => (
                    <DocLine key={l.text} $indent={l.indent} $short={l.short}>{l.text}</DocLine>
                  ))}
                </DocText>
              </Sheet>
            </Viewer>
          </FileView>
        </TeamsBody>
      </Teams>
    </BrowserBody>
  </Browser>
);

const VBoxWindow = () => (
  <VBox>
    <TitleBar>
      <TitleLeft><VBoxCube /><PinDot /></TitleLeft>
      <WindowTitle>Oracle VM VirtualBox Manager</WindowTitle>
      <WindowButtons>
        <WindowButton aria-label="Згорнути" />
        <WindowButton aria-label="Розгорнути" />
        <WindowButton aria-label="Закрити" />
      </WindowButtons>
    </TitleBar>
    <VBoxBody>
      <MachineList>
        <ToolsRow><ToolsIcon />Tools</ToolsRow>
        {machines.map((m) => (
          <MachineRow key={m.name} $selected={m.selected}>
            {m.icon}
            <MachineText>
              <MachineName>{m.name}</MachineName>
              <MachineState><PowerIcon />Вимкнено</MachineState>
            </MachineText>
            {m.selected && <MachineMenuIcon />}
          </MachineRow>
        ))}
      </MachineList>
      <Details>
        <Toolbar>
          <ToolButton><Starburst />Створити...</ToolButton>
          <ToolButton><GearBig />Налаштування...</ToolButton>
          <ToolButton disabled><DiscardArrow />Відкинути</ToolButton>
          <ToolButton><StartArrow />Запустити</ToolButton>
          <MenuArrow aria-label="Меню запуску"><svg width="10" height="6" viewBox="0 0 10 6" fill="none" stroke="#dedee0" strokeWidth="1.200"><path d="m1 1 4 4 4-4" /></svg></MenuArrow>
        </Toolbar>
        <Split>
          <div>{topSections.map((s) => <DetailSection key={s.title} {...s} />)}</div>
          <PreviewColumn>
            <Section>
              <SectionTitle><SectionIcon name="general" />Перегляд</SectionTitle>
              <Monitor><Screen>Desktop_Chomko_clone</Screen></Monitor>
            </Section>
          </PreviewColumn>
        </Split>
        {sections.map((s) => <DetailSection key={s.title} {...s} />)}
      </Details>
    </VBoxBody>
  </VBox>
);

export default function App() {
  return (
    <Desktop>
      <Global />
      <Defs />
      <TopPanel />
      <Workspace>
        <BrowserWindow />
        <VBoxWindow />
        <RemoteTab aria-label="TeamViewer">
          <svg width="24" height="53" viewBox="0 0 24 53">
            <path d="M0 3a3 3 0 0 1 3-3h21v52L0 37Z" fill="#fff" />
            <rect x="1" y="2" width="22" height="22" fill="url(#tvBlue)" />
            <circle cx="12" cy="13" r="9" fill="#fff" />
            <path d={arrowsPath} transform="translate(4 7.200) scale(1.150)" fill="#0d6bd0" />
          </svg>
        </RemoteTab>
      </Workspace>
    </Desktop>
  );
}
